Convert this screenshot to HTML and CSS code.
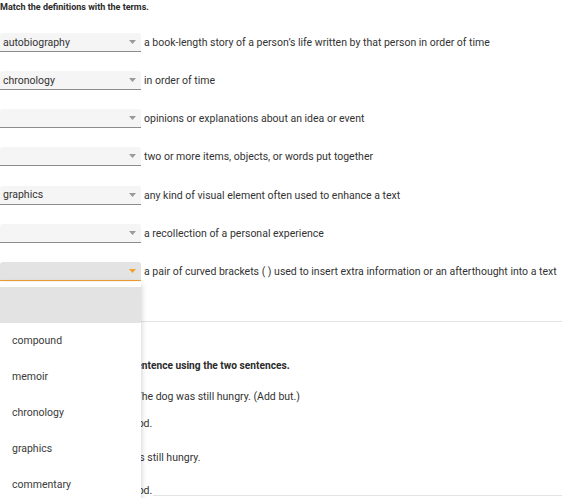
FILE: index.html
```html
<!DOCTYPE html>
<html>
<head>
<meta charset="utf-8">
<link rel="stylesheet" href="styles.css">
</head>
<body>
<div class="page">
  <p class="title">Match the definitions with the terms.</p>
  <div class="rows">
    <div class="row">
      <div class="select"><span class="value">autobiography</span><svg class="arrow" width="7" height="4" viewBox="0 0 7 4"><path d="M0 0H7L3.5 4Z"/></svg></div>
      <span class="def">a book-length story of a person’s life written by that person in order of time</span>
    </div>
    <div class="row">
      <div class="select"><span class="value">chronology</span><svg class="arrow" width="7" height="4" viewBox="0 0 7 4"><path d="M0 0H7L3.5 4Z"/></svg></div>
      <span class="def">in order of time</span>
    </div>
    <div class="row">
      <div class="select"><span class="value"></span><svg class="arrow" width="7" height="4" viewBox="0 0 7 4"><path d="M0 0H7L3.5 4Z"/></svg></div>
      <span class="def">opinions or explanations about an idea or event</span>
    </div>
    <div class="row">
      <div class="select"><span class="value"></span><svg class="arrow" width="7" height="4" viewBox="0 0 7 4"><path d="M0 0H7L3.5 4Z"/></svg></div>
      <span class="def">two or more items, objects, or words put together</span>
    </div>
    <div class="row">
      <div class="select"><span class="value">graphics</span><svg class="arrow" width="7" height="4" viewBox="0 0 7 4"><path d="M0 0H7L3.5 4Z"/></svg></div>
      <span class="def">any kind of visual element often used to enhance a text</span>
    </div>
    <div class="row">
      <div class="select"><span class="value"></span><svg class="arrow" width="7" height="4" viewBox="0 0 7 4"><path d="M0 0H7L3.5 4Z"/></svg></div>
      <span class="def">a recollection of a personal experience</span>
    </div>
    <div class="row">
      <div class="select open"><span class="value"></span><svg class="arrow" width="7" height="4" viewBox="0 0 7 4"><path d="M0 0H7L3.5 4Z"/></svg></div>
      <span class="def">a pair of curved brackets ( ) used to insert extra information or an afterthought into a text</span>
    </div>
  </div>

  <hr class="divider">

  <p class="q2">Write a complete compound sentence using the two sentences.</p>
  <p class="line l1">1. The dog ate all of its food. The dog was still hungry. (Add but.)</p>
  <p class="line l2">1. The big dog ate all of his food.</p>
  <p class="line l3">2. The dog ate its food. He was still hungry.</p>
  <div class="line l4"><span>1. The big dog ate all of his food.</span><div class="answer"></div></div>

  <div class="menu">
    <div class="item active"></div>
    <div class="item">compound</div>
    <div class="item">memoir</div>
    <div class="item">chronology</div>
    <div class="item">graphics</div>
    <div class="item">commentary</div>
  </div>
</div>
</body>
</html>
```
FILE: styles.css
```css
html, body {
  margin: 0;
  padding: 0;
  background: #fff;
}
body {
  font-family: Roboto, "Liberation Sans", sans-serif;
  font-size: 10.5px;
  color: #333;
  overflow: hidden;
}
.page {
  position: relative;
  width: 562px;
  height: 498px;
  overflow: hidden;
}
.title {
  margin: 0;
  font-size: 9px;
  font-weight: 700;
  line-height: 14px;
  color: #2b2b2b;
}
.rows {
  display: flex;
  flex-direction: column;
  gap: 19.17px;
  margin-top: 19px;
}
.row {
  display: flex;
  align-items: center;
  gap: 3px;
  height: 19px;
}
.select {
  width: 141px;
  height: 19px;
  flex: none;
  box-sizing: border-box;
  display: flex;
  align-items: center;
  padding: 0 5px 0 3px;
  background: #f5f5f5;
  border-bottom: 1px solid #8c8c8c;
  border-radius: 3px 3px 0 0;
  color: #333;
}
.select.open {
  background: #e3e3e3;
  border-bottom-color: #f0a030;
}
.value {
  flex: 1;
}
.arrow {
  fill: #9a9a9a;
}
.open .arrow {
  fill: #f5a02a;
}
.def {
  white-space: nowrap;
  color: #333;
}
.divider {
  margin: 40px 0 0;
  border: 0;
  border-top: 1px solid #e2e2e2;
  height: 0;
}
.q2 {
  margin: 37px 0 0;
  font-size: 10.2px;
  font-weight: 700;
  line-height: 14px;
  white-space: nowrap;
  color: #2b2b2b;
}
.line {
  margin: 0;
  line-height: 14px;
  white-space: nowrap;
  color: #333;
}
.l1 { margin-top: 17px; }
.l2 { margin-top: 13px; }
.l3 { margin-top: 20px; }
.l4 {
  margin-top: 19px;
  display: flex;
  align-items: flex-end;
}
.answer {
  flex: 1;
  margin-left: 1px;
  border-top: 1px solid #e4e4e4;
  height: 2px;
}
.menu {
  position: absolute;
  left: 0;
  top: 282px;
  width: 141px;
  padding-top: 5px;
  background: #fff;
  box-shadow: 0 2px 6px rgba(0, 0, 0, 0.22);
}
.item {
  height: 36px;
  line-height: 36px;
  padding-left: 12px;
  color: #3a3a3a;
}
.item.active {
  background: #e3e3e3;
}
```
